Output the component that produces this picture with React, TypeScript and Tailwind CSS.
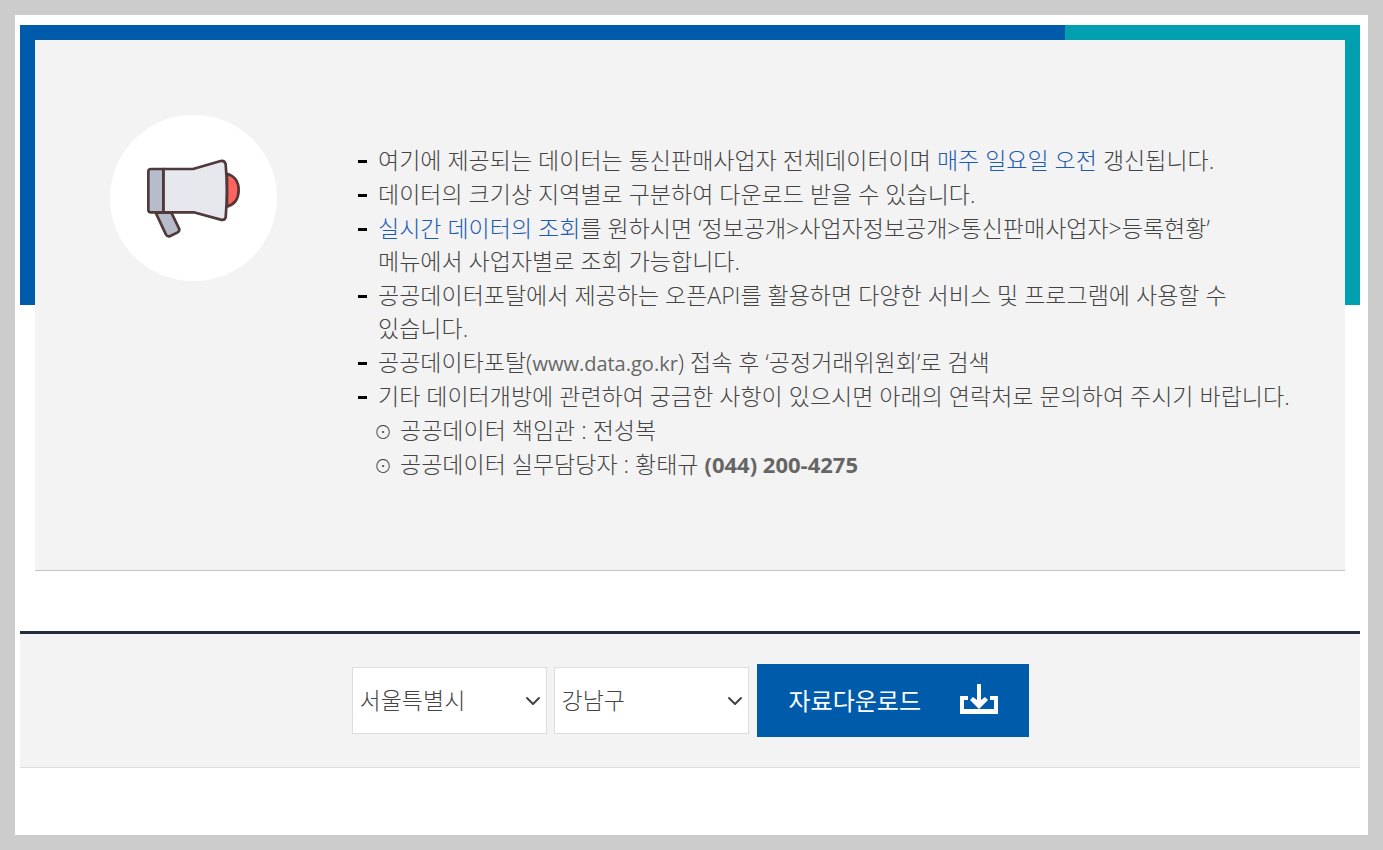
import { useState } from 'react';
import type { ReactNode } from 'react';
import { ChevronDown } from 'lucide-react';

const districts: Record<string, string[]> = {
  서울특별시: ['강남구', '강동구', '강북구', '강서구', '관악구'],
  부산광역시: ['강서구', '금정구', '남구', '동구'],
  대구광역시: ['남구', '달서구', '동구', '북구'],
};

function MegaphoneIcon() {
  return (
    <svg
      viewBox="141 160 279 237"
      className="w-[93px] h-[79px]"
      stroke="#4f3a39"
      strokeWidth="8"
      strokeLinejoin="round"
      strokeLinecap="round"
      aria-hidden="true"
    >
      <path d="M381 204 C404 210 416 229 416 253 C416 277 404 296 381 303 Z" fill="#ff645d" />
      <path d="M167 321 L198 387 Q203 395 211 391 L233 380 Q240 376 237 368 L214 321 Z" fill="#b7bcca" />
      <path
        d="M190 190 L279 190 L362 166 Q374 164 377 176 Q384 253 377 335 Q374 345 362 342 L281 320 L190 320 Z"
        fill="#e6e8ed"
      />
      <path d="M190 190 L153 190 Q145 190 145 198 L145 312 Q145 320 153 320 L190 320 Z" fill="#b7bcca" />
    </svg>
  );
}

function DownloadIcon() {
  return (
    <svg viewBox="0 0 38 30" className="w-[38px] h-[30px] mb-1" fill="#fff" aria-hidden="true">
      <path d="M0 12H8V16H4V25H34V16H30V12H38V30H0Z" />
      <path d="M17 0H21V16L25 13L28 16L19 25L10 16L13 13L17 16Z" />
    </svg>
  );
}

function Notice({ children }: { children: ReactNode }) {
  return (
    <li className="flex gap-[11px]">
      <span className="w-[9px] h-[3px] mt-4 shrink-0 bg-black" />
      <p>{children}</p>
    </li>
  );
}

function Contact({ children }: { children: ReactNode }) {
  return (
    <li className="flex gap-2 pl-4">
      <span className="w-[18px] h-[33px] shrink-0 text-lg leading-[37px]">⊙</span>
      <p>{children}</p>
    </li>
  );
}

function Point({ children }: { children: ReactNode }) {
  return <span className="text-[#1c5bb0]">{children}</span>;
}

interface SelectProps {
  label: string;
  value: string;
  options: string[];
  onChange: (value: string) => void;
}

function Select({ label, value, options, onChange }: SelectProps) {
  return (
    <div className="relative">
      <select
        aria-label={label}
        value={value}
        onChange={(e) => onChange(e.target.value)}
        className="appearance-none w-[195px] h-[67px] px-[7px] bg-white border border-[#ddd] text-[#444] text-[23px] font-light"
      >
        {options.map((name) => (
          <option key={name}>{name}</option>
        ))}
      </select>
      <ChevronDown
        className="absolute right-0.5 inset-y-0 my-auto w-6 h-6 text-[#444] pointer-events-none"
        strokeWidth={2}
      />
    </div>
  );
}

export default function App() {
  const [city, setCity] = useState('서울특별시');
  const [district, setDistrict] = useState('강남구');

  const handleCity = (value: string) => {
    setCity(value);
    setDistrict(districts[value][0]);
  };

  return (
    <div className="min-h-screen flex flex-col bg-white border-[15px] border-[#ccc] pt-2.5 pl-[5px] pr-2 font-['Open_Sans','Noto_Sans_CJK_KR',sans-serif]">
      <section>
        <div className="flex h-[15px]">
          <div className="w-[78%] bg-[#005bab]" />
          <div className="flex-1 bg-[#00a0b0]" />
        </div>
        <div className="flex">
          <div className="w-[15px] h-[265px] shrink-0 bg-[#005bab]" />
          <div className="flex-1 flex gap-[81px] bg-[#f3f3f3] border-b border-[#c4c4c4] pl-[75px] pr-12 pb-[89px]">
            <div className="w-[167px] h-[166px] mt-[75px] shrink-0 rounded-full bg-white flex items-center justify-center">
              <MegaphoneIcon />
            </div>
            <ul className="flex-1 mt-[104px] flex flex-col gap-px break-keep text-[23px] leading-[33px] font-light text-[#444]">
              <Notice>
                여기에 제공되는 데이터는 통신판매사업자 전체데이터이며 <Point>매주 일요일 오전</Point> 갱신됩니다.
              </Notice>
              <Notice>데이터의 크기상 지역별로 구분하여 다운로드 받을 수 있습니다.</Notice>
              <Notice>
                <Point>실시간 데이터의 조회</Point>를 원하시면 ‘정보공개&gt;사업자정보공개&gt;통신판매사업자&gt;등록현황’
                <br />
                메뉴에서 사업자별로 조회 가능합니다.
              </Notice>
              <Notice>
                공공데이터포탈에서 제공하는 오픈API를 활용하면 다양한 서비스 및 프로그램에 사용할 수 있습니다.
              </Notice>
              <Notice>
                공공데이타포탈(
                <span className="text-xl leading-none font-normal text-[#666]">www.data.go.kr</span>) 접속 후
                ‘공정거래위원회’로 검색
              </Notice>
              <Notice>
                기타 데이터개방에 관련하여 궁금한 사항이 있으시면 아래의 연락처로 문의하여 주시기 바랍니다.
              </Notice>
              <Contact>공공데이터 책임관 : 전성복</Contact>
              <Contact>
                공공데이터 실무담당자 : 황태규{' '}
                <strong className="text-[22px] leading-none font-bold text-[#666]">(044) 200-4275</strong>
              </Contact>
            </ul>
          </div>
          <div className="w-[15px] h-[265px] shrink-0 bg-[#00a0b0]" />
        </div>
      </section>

      <form
        className="mt-[60px] mb-[67px] py-[30px] flex items-center justify-center bg-[#f3f3f3] border-t-3 border-t-[#242b3a] border-b border-b-[#ddd]"
        onSubmit={(e) => e.preventDefault()}
      >
        <div className="flex gap-[7px]">
          <Select label="시도" value={city} options={Object.keys(districts)} onChange={handleCity} />
          <Select label="시군구" value={district} options={districts[city]} onChange={setDistrict} />
        </div>
        <button
          type="submit"
          className="ml-2 w-[272px] h-[73px] pl-8 pr-[31px] flex items-center justify-between bg-[#005bab] text-white text-2xl"
        >
          자료다운로드
          <DownloadIcon />
        </button>
      </form>
    </div>
  );
}
